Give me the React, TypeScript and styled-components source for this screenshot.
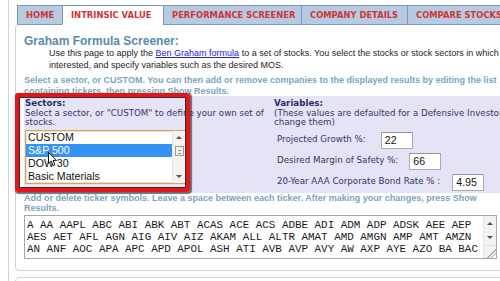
import styled, { createGlobalStyle } from "styled-components";

const GlobalStyle = createGlobalStyle`
  html, body {
    margin: 0;
    padding: 0;
    background: #fff;
    overflow: hidden;
  }
  body {
    font-family: "Liberation Sans", Arial, sans-serif;
  }
`;

const Frame = styled.div`
  margin-left: 8px;
  border-left: 1px solid #d3d3d3;
  padding: 5px 0 0 6px;
  height: 281px;
  width: 700px;
  box-sizing: border-box;
`;

const TabBar = styled.div`
  display: flex;
  margin-left: 2px;
  position: relative;
  z-index: 1;
`;

const Tab = styled.div<{ $active?: boolean; $w: number }>`
  width: ${p => p.$w}px;
  height: 20px;
  box-sizing: border-box;
  margin-left: -1px;
  &:first-child {
    margin-left: 0;
  }
  padding-left: 8px;
  border: 1px solid #7d98c0;
  border-bottom: ${p => (p.$active ? "1px solid #fff" : "1px solid #7d98c0")};
  background: ${p => (p.$active ? "#fff" : "#b5cbe2")};
  color: #d23434;
  font: bold 8.4px "DejaVu Sans", Verdana, sans-serif;
  display: flex;
  align-items: center;
  white-space: nowrap;
`;

const Panel = styled.div`
  margin-top: -1px;
  border: 1px solid #c6d4e2;
  border-radius: 4px;
  padding: 9px 0 11px 8px;
  background: #fff;
`;

const Heading = styled.h2`
  margin: 0;
  font: bold 12px/14px "Liberation Sans", Arial, sans-serif;
  color: #5a8aab;
`;

const Intro = styled.p`
  margin: 0 0 0 25px;
  font-size: 9px;
  line-height: 11.5px;
  color: #1e1e1e;
  white-space: nowrap;
`;

const DocLink = styled.a`
  color: #2424cc;
  text-decoration: underline;
`;

const Hint = styled.p<{ $top?: number }>`
  margin: ${p => p.$top ?? 0}px 0 0 0;
  font-weight: bold;
  font-size: 9px;
  line-height: 10.5px;
  color: #7ba4bf;
  white-space: nowrap;
`;

const Options = styled.div`
  position: relative;
  display: flex;
  background: #e4e4f6;
  padding: 3px 0 2px 1px;
`;

const Highlight = styled.div`
  position: absolute;
  left: -9px;
  top: -3px;
  width: 175px;
  height: 99px;
  box-sizing: border-box;
  border: 4px solid #e4161a;
  border-radius: 3px;
  box-shadow: inset 0 0 0 1px #3b2a2a, 1px 1px 1px 1px rgba(40, 40, 40, 0.65);
  pointer-events: none;
`;

const Cell = styled.div<{ $w?: number }>`
  width: ${p => (p.$w ? `${p.$w}px` : "auto")};
  flex: ${p => (p.$w ? "none" : "1")};
  font: 8.7px/9.5px "DejaVu Sans", Verdana, sans-serif;
  color: #35336a;
  white-space: nowrap;
`;

const CellTitle = styled.div`
  font-weight: bold;
  color: #2b2b66;
`;

const ListBox = styled.div`
  position: relative;
  margin: 2px 0 6px 0;
  width: 161px;
  height: 54px;
  box-sizing: border-box;
  border: 1px solid #d1a95c;
  box-shadow: inset 0 0 0 1px #f1e0b8;
  background: #fff;
  display: flex;
`;

const OptionList = styled.div`
  flex: 1;
`;

const Option = styled.div<{ $selected?: boolean }>`
  height: 13px;
  padding-left: 2px;
  font: 10.6px/13px "Liberation Sans", Arial, sans-serif;
  background: ${p => (p.$selected ? "#3592f0" : "transparent")};
  color: ${p => (p.$selected ? "#fff" : "#111")};
`;

const ScrollBar = styled.div<{ $w: number }>`
  width: ${p => p.$w}px;
  flex: none;
  display: flex;
  flex-direction: column;
  align-items: center;
  background: #f3f3f3;
  border-left: 1px solid #e6e6e6;
`;

const ArrowBtn = styled.div<{ $down?: boolean; $h: number }>`
  height: ${p => p.$h}px;
  width: 100%;
  display: flex;
  align-items: center;
  justify-content: center;
  &::after {
    content: "";
    border-left: 3px solid transparent;
    border-right: 3px solid transparent;
    ${p => (p.$down ? "border-top: 3px solid #555;" : "border-bottom: 3px solid #555;")}
  }
`;

const Thumb = styled.div`
  margin-top: 2px;
  width: 9px;
  height: 10px;
  box-sizing: border-box;
  border: 1px solid #9a9a9a;
  background: repeating-linear-gradient(#f4f4f4 0 2px, #8a8a8a 2px 3px) content-box;
  padding: 1px 2px;
`;

const Spacer = styled.div`
  flex: 1;
`;

const Cursor = styled.svg`
  position: absolute;
  left: 22px;
  top: 21px;
`;

const FieldRow = styled.div`
  display: flex;
  align-items: center;
  height: 17px;
  margin-top: 4px;
  padding-left: 3px;
  &:first-of-type {
    margin-top: 2px;
  }
`;

const NumInput = styled.div<{ $gap: number }>`
  margin-left: ${p => p.$gap}px;
  width: 32px;
  height: 17px;
  box-sizing: border-box;
  border: 1px solid #a4abb4;
  border-top-color: #8d949c;
  background: #fff;
  padding-left: 3px;
  font: 10.6px/15px "Liberation Sans", Arial, sans-serif;
  color: #111;
`;

const Tickers = styled.div`
  margin-top: 1.5px;
  width: 473px;
  height: 44px;
  box-sizing: border-box;
  border: 1px solid #a7a7a7;
  background: #fff;
  display: flex;
`;

const TickerText = styled.div`
  flex: 1;
  padding: 3px 0 0 2px;
  font: 10.9px/12px "Liberation Mono", "Courier New", monospace;
  color: #1a1a1a;
  white-space: pre;
  overflow: hidden;
`;

const Grip = styled.div`
  width: 100%;
  height: 13px;
  border-top: 1px solid #e2e2e2;
  background: linear-gradient(135deg, transparent 62%, #aaa 62% 67%, transparent 67% 78%, #aaa 78% 83%, transparent 83%);
`;

const NextPanel = styled.div`
  margin-top: 6px;
  height: 40px;
  border: 1px solid #c6d4e2;
  border-radius: 4px;
`;

const tabs = [
  { label: "HOME", w: 46 },
  { label: "INTRINSIC VALUE", w: 102, active: true },
  { label: "PERFORMANCE SCREENER", w: 139 },
  { label: "COMPANY DETAILS", w: 107 },
  { label: "COMPARE STOCKS", w: 120 },
];

const sectors = ["CUSTOM", "S&P 500", "DOW 30", "Basic Materials"];

const fields = [
  { label: "Projected Growth %:", value: "22", gap: 15 },
  { label: "Desired Margin of Safety %:", value: "66", gap: 11 },
  { label: "20-Year AAA Corporate Bond Rate % :", value: "4.95", gap: 12 },
];

const tickerLines = [
  "A AA AAPL ABC ABI ABK ABT ACAS ACE ACS ADBE ADI ADM ADP ADSK AEE AEP",
  "AES AET AFL AGN AIG AIV AIZ AKAM ALL ALTR AMAT AMD AMGN AMP AMT AMZN",
  "AN ANF AOC APA APC APD APOL ASH ATI AVB AVP AVY AW AXP AYE AZO BA BAC",
];

export default function App() {
  return (
    <>
      <GlobalStyle />
      <Frame>
        <TabBar>
          {tabs.map(t => (
            <Tab key={t.label} $w={t.w} $active={t.active}>
              {t.label}
            </Tab>
          ))}
        </TabBar>

        <Panel>
          <Heading>Graham Formula Screener:</Heading>
          <Intro>
            Use this page to apply the <DocLink href="#">Ben Graham formula</DocLink> to a set of
            stocks. You select the stocks or stock sectors in which you are
            <br />
            interested, and specify variables such as the desired MOS.
          </Intro>
          <Hint $top={4}>
            Select a sector, or CUSTOM. You can then add or remove companies to the displayed results by editing the list
            <br />
            containing tickers, then pressing Show Results.
          </Hint>

          <Options>
            <Cell $w={249}>
              <CellTitle>Sectors:</CellTitle>
              <div>Select a sector, or "CUSTOM" to define your own set of</div>
              <div>stocks.</div>
              <ListBox>
                <OptionList>
                  {sectors.map(s => (
                    <Option key={s} $selected={s === "S&P 500"}>
                      {s}
                    </Option>
                  ))}
                </OptionList>
                <ScrollBar $w={12}>
                  <ArrowBtn $h={13} />
                  <Thumb />
                  <Spacer />
                  <ArrowBtn $h={13} $down />
                </ScrollBar>
                <Cursor width="10" height="15" viewBox="0 0 10 15">
                  <path
                    d="M0.5 0.5 L0.5 11.5 L3.2 9 L5.2 13.6 L6.9 12.9 L5 8.4 L8.6 8.4 Z"
                    fill="#fff"
                    stroke="#000"
                    strokeWidth="0.9"
                    strokeLinejoin="round"
                  />
                </Cursor>
              </ListBox>
            </Cell>
            <Cell>
              <CellTitle>Variables:</CellTitle>
              <div>(These values are defaulted for a Defensive Investor, but feel free to</div>
              <div>change them)</div>
              {fields.map(f => (
                <FieldRow key={f.label}>
                  <span>{f.label}</span>
                  <NumInput $gap={f.gap}>{f.value}</NumInput>
                </FieldRow>
              ))}
            </Cell>
            <Highlight />
          </Options>

          <Hint>
            Add or delete ticker symbols. Leave a space between each ticker. After making your changes, press Show
            <br />
            Results.
          </Hint>
          <Tickers>
            <TickerText>{tickerLines.join("\n")}</TickerText>
            <ScrollBar $w={12}>
              <ArrowBtn $h={15} />
              <ArrowBtn $h={15} $down />
              <Spacer />
              <Grip />
            </ScrollBar>
          </Tickers>
        </Panel>
        <NextPanel />
      </Frame>
    </>
  );
}
